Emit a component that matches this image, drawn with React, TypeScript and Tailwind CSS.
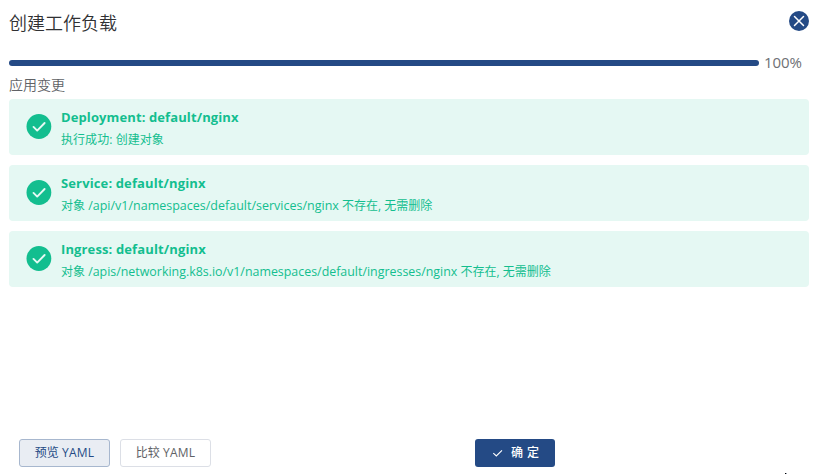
import React from 'react';

type Result = { title: string; titleClass: string; message: React.ReactNode };

const results: Result[] = [
  {
    title: 'Deployment: default/nginx',
    titleClass: 'tracking-[0.11px]',
    message: <span className="tracking-[0.06px]">执行成功: 创建对象</span>,
  },
  {
    title: 'Service: default/nginx',
    titleClass: 'tracking-[0.13px]',
    message: <>对象 <span className="text-[12.5px]">/api/v1/namespaces/default/services/nginx</span> 不存在, 无需删除</>,
  },
  {
    title: 'Ingress: default/nginx',
    titleClass: 'tracking-[0.13px]',
    message: <>对象 <span className="text-[12.42px]">/apis/networking.k8s.io/v1/namespaces/default/ingresses/nginx</span> 不存在, 无需删除</>,
  },
];

function SuccessIcon() {
  return (
    <svg className="h-[26px] w-[26px] shrink-0" viewBox="0 0 26 26" fill="none">
      <circle cx="12.9" cy="12.5" r="12.4" fill="#13be8f" />
      <path d="M7.5 12.9 11.2 16.6 18.6 9" stroke="#e7f9f4" strokeWidth="1.9" strokeLinecap="round" strokeLinejoin="round" />
    </svg>
  );
}

function ResultAlert({ title, titleClass, message }: Result) {
  return (
    <div className="flex h-14 items-center rounded bg-[#e5f8f3] pl-[17px] text-[#13be8f]">
      <SuccessIcon />
      <div className="ml-[9px] whitespace-nowrap pt-0.5">
        <div className={`text-[13px] leading-[18px] font-bold ${titleClass}`}>{title}</div>
        <div className="mt-[5px] h-[18px] text-[12px] leading-[18px]">{message}</div>
      </div>
    </div>
  );
}

export default function App() {
  return (
    <div className="relative flex h-[474px] w-[815px] flex-col overflow-hidden bg-white pr-1.5 pl-[9px] font-['Open_Sans','Noto_Sans_CJK_SC',sans-serif] text-[#606266]">
      <header className="flex h-12 justify-between">
        <h1 className="mt-[10px] text-[18px] leading-[27px] text-[#303133] font-[350]">创建工作负载</h1>
        <button className="mt-[11px] h-5 w-5" aria-label="关闭">
          <svg className="h-5 w-5" viewBox="0 0 20 20">
            <circle cx="10" cy="10" r="10" fill="#244a85" />
            <path d="m5.5 5.5 9 9m0-9-9 9" stroke="#fff" strokeWidth="1.5" strokeLinecap="round" />
          </svg>
        </button>
      </header>
      <div className="mt-1 flex h-[22px] items-center">
        <div className="h-1.5 w-[750px] rounded-full bg-[#244a85]" />
        <span className="mb-0.5 ml-[5px] text-[15px] leading-[20px] tracking-[-0.1px] text-[#6e7074]">100%</span>
      </div>
      <h2 className="mt-px h-6 text-[14px] leading-[20px] font-[350]">应用变更</h2>
      <div className="flex w-[800px] flex-col gap-2.5">
        {results.map((result) => (
          <ResultAlert key={result.title} {...result} />
        ))}
      </div>
      <footer className="mt-auto mb-[7px] flex h-7 items-center pl-[10px] text-[12px]">
        <button className="h-7 w-[91px] rounded-[3px] border border-[#a7b7ce] bg-[#e9edf3] text-[#244a85]">预览 <span className="tracking-[0.2px]">YAML</span></button>
        <button className="ml-2.5 h-7 w-[91px] rounded-[3px] border border-[#dcdfe6] bg-white">比较 <span className="tracking-[0.2px]">YAML</span></button>
        <button className="ml-[264px] flex h-7 w-20 items-center rounded-[3px] bg-[#244a85] pl-[17px] font-medium text-white">
          <svg className="h-3 w-3" viewBox="0 0 12 12" fill="none">
            <path d="m1.3 6.2 3 2.8L10 3.3" stroke="currentColor" strokeWidth="1.1" />
          </svg>
          <span className="ml-[7px] tracking-[4px]">确定</span>
        </button>
      </footer>
      <div className="absolute bottom-0 left-[785px] flex h-px w-0.5">
        <i className="h-px w-px bg-black" />
        <i className="h-px w-px bg-gray-400" />
      </div>
    </div>
  );
}
